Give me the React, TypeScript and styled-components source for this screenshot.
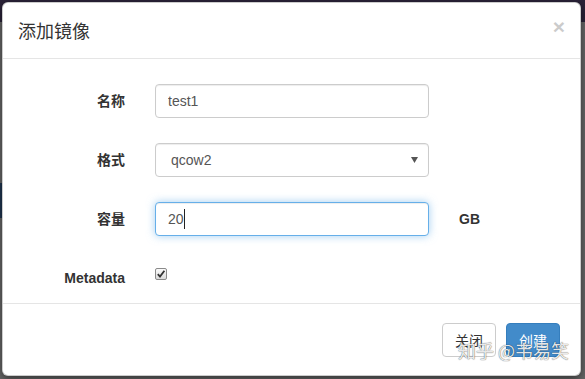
import React from "react";
import styled, { createGlobalStyle } from "styled-components";

const Global = createGlobalStyle`
  html, body { margin: 0; padding: 0; }
  body {
    width: 585px;
    height: 379px;
    overflow: hidden;
    background: #666;
    font-family: "Liberation Sans", Arial, "Noto Sans CJK SC", sans-serif;
    font-size: 14px;
    color: #333;
  }
  * { box-sizing: border-box; }
`;

const Page = styled.div`
  position: relative;
  width: 585px;
  height: 379px;
  background: #666;
  display: flex;
  flex-direction: column;
  overflow: hidden;
`;

const DimNav = styled.div`
  height: 22px;
  background: #2a2238;
`;

const DimGap = styled.div<{ h: number }>`
  height: ${(p) => p.h}px;
`;

const DimBand = styled.div`
  width: 220px;
  height: 35px;
  background: #1f3550;
`;

const Modal = styled.div`
  position: absolute;
  top: 2px;
  left: 2px;
  width: 579px;
  background: #fff;
  border: 1px solid rgba(0, 0, 0, 0.2);
  border-radius: 6px;
  box-shadow: 0 3px 9px rgba(0, 0, 0, 0.5);
  display: flex;
  flex-direction: column;
`;

const Header = styled.div`
  display: flex;
  align-items: flex-start;
  justify-content: space-between;
  padding: 15px;
  border-bottom: 1px solid #e5e5e5;
`;

const Title = styled.h4`
  margin: 0;
  font-size: 18px;
  line-height: 25px;
  font-weight: 400;
  color: #333;
  font-family: "Noto Sans CJK SC", "Liberation Sans", sans-serif;
`;

const Close = styled.button`
  margin-top: -2px;
  padding: 0;
  border: 0;
  background: transparent;
  font-family: "Liberation Sans", Arial, sans-serif;
  font-size: 21px;
  font-weight: bold;
  line-height: 1;
  color: #000;
  opacity: 0.2;
  text-shadow: 0 1px 0 #fff;
  cursor: pointer;
`;

const Body = styled.div`
  padding: 25px 20px 8px;
`;

const Form = styled.div`
  display: grid;
  grid-template-columns: 102px 274px 1fr;
  grid-auto-rows: 34px;
  column-gap: 30px;
  row-gap: 25px;
  align-items: start;
`;

const Label = styled.label`
  padding-top: 7px;
  text-align: right;
  font-weight: bold;
  font-size: 14px;
  line-height: 20px;
  color: #333;
  font-family: "Liberation Sans", Arial, "Noto Sans CJK SC", sans-serif;
`;

const Addon = styled.span`
  padding-top: 7px;
  font-weight: bold;
  line-height: 20px;
  color: #333;
`;

const Input = styled.input<{ $focus?: boolean }>`
  display: block;
  width: 274px;
  height: 34px;
  padding: 6px 12px;
  font-family: "Liberation Sans", Arial, sans-serif;
  font-size: 14px;
  line-height: 20px;
  color: #555;
  background: #fff;
  border: 1px solid ${(p) => (p.$focus ? "#66afe9" : "#ccc")};
  border-radius: 4px;
  outline: none;
  box-shadow: ${(p) =>
    p.$focus
      ? "inset 0 1px 1px rgba(0,0,0,.075), 0 0 8px rgba(102,175,233,.6)"
      : "inset 0 1px 1px rgba(0,0,0,.075)"};
`;

const Field = styled.div`
  position: relative;
  width: 274px;
`;

const Select = styled.select`
  display: block;
  width: 274px;
  height: 34px;
  padding: 6px 12px 6px 15px;
  font-family: "Liberation Sans", Arial, sans-serif;
  font-size: 14px;
  color: #555;
  background: #fff;
  border: 1px solid #ccc;
  border-radius: 4px;
  outline: none;
  appearance: none;
  box-shadow: inset 0 1px 1px rgba(0,0,0,.075);
`;

const Arrow = styled.svg`
  position: absolute;
  right: 11px;
  top: 14px;
  pointer-events: none;
`;

const Caret = styled.span`
  position: absolute;
  left: 29px;
  top: 7px;
  width: 1px;
  height: 20px;
  background: #222;
`;

const CheckCell = styled.div`
  padding-top: 7px;
`;

const CheckBox = styled.span`
  display: block;
  width: 12px;
  height: 12px;
  border: 1px solid #8a8a8a;
  border-radius: 2px;
  background: linear-gradient(#fbfbfb, #dadada);
  position: relative;
`;

const Footer = styled.div`
  display: flex;
  justify-content: flex-end;
  gap: 10px;
  padding: 19px 20px 18px;
  border-top: 1px solid #e5e5e5;
`;

const Button = styled.button<{ $primary?: boolean }>`
  height: 34px;
  padding: 6px 12px;
  font-family: "Noto Sans CJK SC", "Liberation Sans", sans-serif;
  font-size: 14px;
  line-height: 20px;
  border-radius: 4px;
  border: 1px solid ${(p) => (p.$primary ? "#357ebd" : "#ccc")};
  background: ${(p) => (p.$primary ? "#428bca" : "#fff")};
  color: ${(p) => (p.$primary ? "#fff" : "#333")};
  cursor: pointer;
`;

const Watermark = styled.div`
  position: absolute;
  left: 458px;
  top: 338px;
  font-family: "Noto Sans CJK SC", sans-serif;
  font-size: 18px;
  line-height: 25px;
  color: rgba(255, 255, 255, 0.9);
  text-shadow: 0 0 1px rgba(0, 0, 0, 0.55), 0 0 1px rgba(0, 0, 0, 0.4);
  white-space: nowrap;
  pointer-events: none;
`;

export default function App() {
  return (
    <>
      <Global />
      <Page>
        <DimNav />
        <DimGap h={161} />
        <DimBand />
        <Modal>
          <Header>
            <Title>添加镜像</Title>
            <Close aria-label="Close">×</Close>
          </Header>
          <Body>
            <Form>
              <Label>名称</Label>
              <Input defaultValue="test1" />
              <span />

              <Label>格式</Label>
              <Field>
                <Select defaultValue="qcow2">
                  <option value="qcow2">qcow2</option>
                  <option value="raw">raw</option>
                </Select>
                <Arrow width="7" height="6" viewBox="0 0 7 6">
                  <path d="M0 0 H7 L3.5 6 Z" fill="#555" />
                </Arrow>
              </Field>
              <span />

              <Label>容量</Label>
              <Field>
                <Input $focus defaultValue="20" />
                <Caret />
              </Field>
              <Addon>GB</Addon>

              <Label>Metadata</Label>
              <CheckCell>
                <CheckBox>
                  <svg width="10" height="10" viewBox="0 0 10 10" style={{ position: "absolute", left: 0, top: 0 }}>
                    <path d="M1.8 5.2 L4 7.6 L8.4 1.8" stroke="#333" strokeWidth="1.8" fill="none" />
                  </svg>
                </CheckBox>
              </CheckCell>
              <span />
            </Form>
          </Body>
          <Footer>
            <Button>关闭</Button>
            <Button $primary>创建</Button>
          </Footer>
        </Modal>
        <Watermark>知乎 @韦易笑</Watermark>
      </Page>
    </>
  );
}
